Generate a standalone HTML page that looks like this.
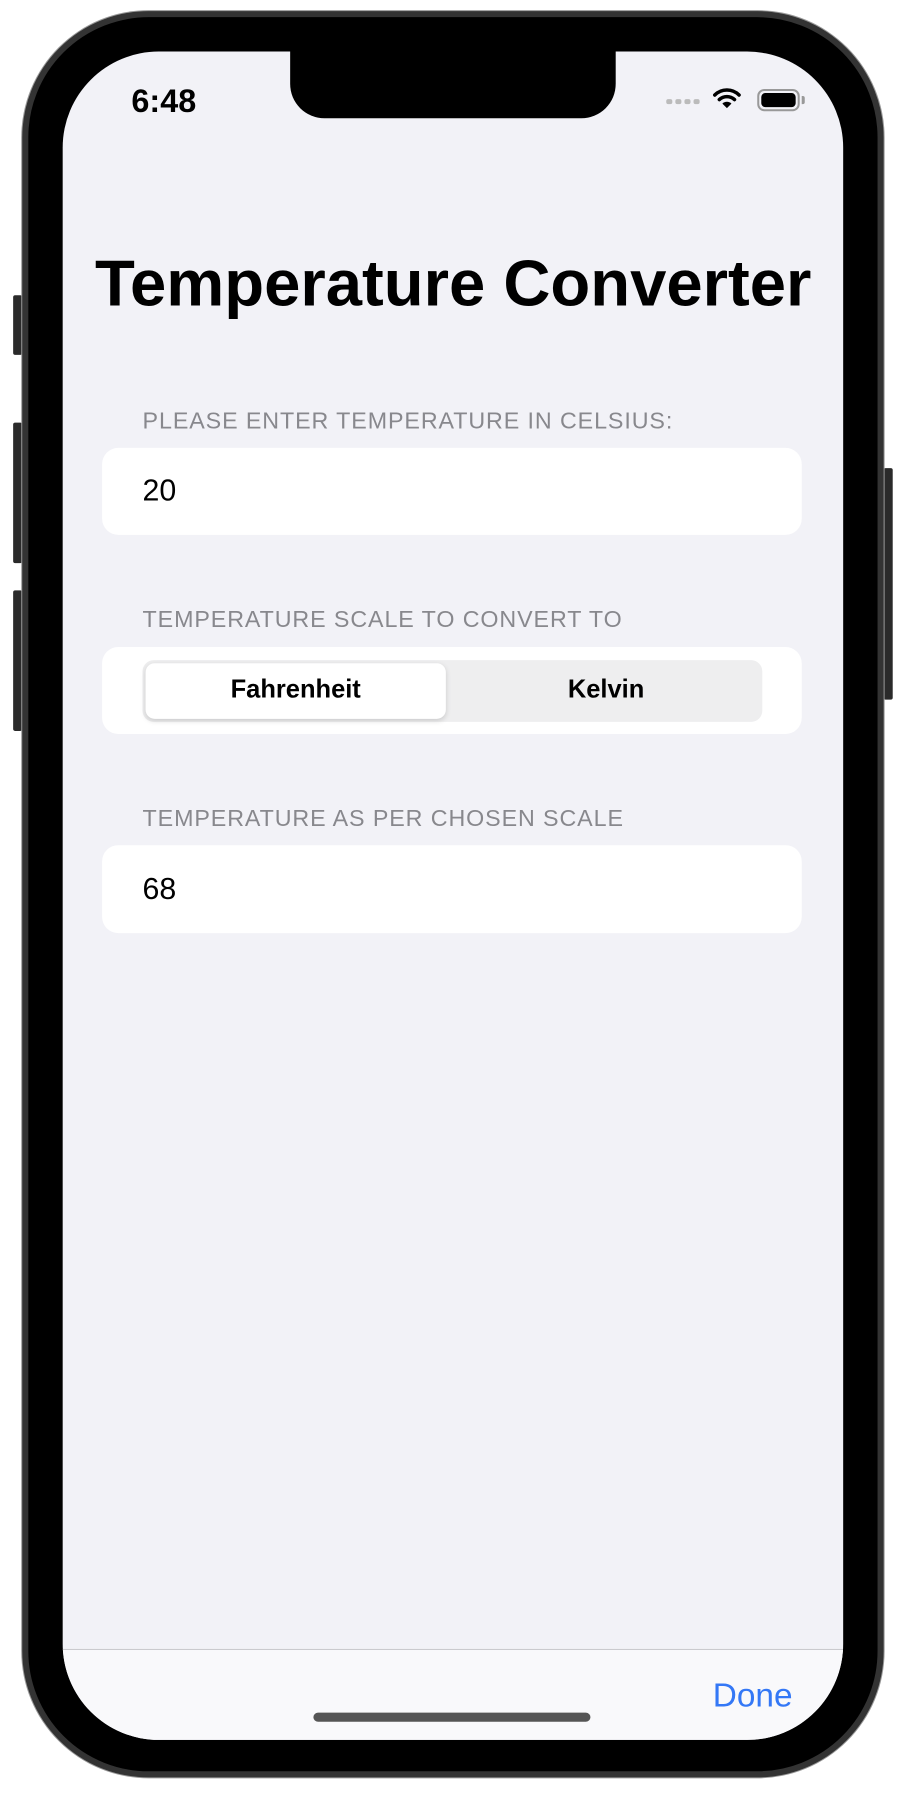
<!DOCTYPE html>
<html><head><meta charset="utf-8"><style>
*{margin:0;padding:0;box-sizing:border-box}
body{width:897px;height:1783px;background:#fff;position:relative;overflow:hidden;font-family:"Liberation Sans",sans-serif}
#wrap{position:absolute;left:0;top:0;width:897px;height:1783px;transform:scale(1.011);transform-origin:0 0}
.abs{position:absolute}
.phone{left:22px;top:11px;width:852px;height:1747px;background:#000;border-radius:125px;border:6px solid #333;box-shadow:0 0 0 1px #999}
.btn{background:#2a2a2a;border-radius:2px}
.screen{left:62px;top:51px;width:772px;height:1670px;background:#f2f2f7;border-radius:95px;overflow:hidden}
.notch{left:225px;top:-2px;width:322px;height:68px;background:#000;border-radius:0 0 34px 34px}
.label{left:79px;font-size:23px;color:#88888d;letter-spacing:0.9px;white-space:nowrap}
.field{left:39px;width:692px;background:#fff;border-radius:16px}
.val{left:79px;font-size:30px;color:#000}
</style></head><body><div id="wrap">
<div class="abs btn" style="left:13px;top:292px;width:9px;height:59px"></div>
<div class="abs btn" style="left:13px;top:418px;width:9px;height:139px"></div>
<div class="abs btn" style="left:13px;top:584px;width:9px;height:139px"></div>
<div class="abs btn" style="left:874px;top:463px;width:9px;height:229px"></div>
<div class="abs phone"></div>
<div class="abs screen">
  <div class="abs notch"></div>
  <div class="abs" style="left:68px;top:31px;font-size:32px;font-weight:bold">6:48</div>
  <div class="abs" style="left:597px;top:47px;display:flex;gap:3px">
    <i style="width:6px;height:5px;background:#bbb;border-radius:2px"></i><i style="width:6px;height:5px;background:#bbb;border-radius:2px"></i><i style="width:6px;height:5px;background:#bbb;border-radius:2px"></i><i style="width:6px;height:5px;background:#bbb;border-radius:2px"></i>
  </div>
  <svg class="abs" style="left:643px;top:34px" width="28" height="24" viewBox="0 0 28 24"><path d="M2 9 A17 17 0 0 1 26 9" stroke="#000" stroke-width="3.5" fill="none" stroke-linecap="round"/><path d="M6.5 13.5 A11 11 0 0 1 21.5 13.5" stroke="#000" stroke-width="3.5" fill="none" stroke-linecap="round"/><path d="M14 22 L9.5 17.5 A6.5 6.5 0 0 1 18.5 17.5 Z" fill="#000"/></svg>
  <div class="abs" style="left:687px;top:37px;width:42px;height:22px;border:2px solid #999;border-radius:7px;padding:2px"><div style="width:100%;height:100%;background:#000;border-radius:4px"></div></div>
  <div class="abs" style="left:731px;top:44px;width:3px;height:8px;background:#999;border-radius:0 2px 2px 0"></div>
  <div class="abs" style="left:32px;top:192px;font-size:64.5px;font-weight:bold;color:#000;white-space:nowrap">Temperature Converter</div>
  <div class="abs label" style="top:352px">PLEASE ENTER TEMPERATURE IN CELSIUS:</div>
  <div class="abs field" style="top:392px;height:86px"></div>
  <div class="abs val" style="top:418px">20</div>
  <div class="abs label" style="top:548px">TEMPERATURE SCALE TO CONVERT TO</div>
  <div class="abs field" style="top:589px;height:86px"></div>
  <div class="abs" style="left:79px;top:602px;width:613px;height:61px;background:#eeeeef;border-radius:11px"></div>
  <div class="abs" style="left:82px;top:605px;width:297px;height:55px;background:#fff;border-radius:9px;box-shadow:0 2px 5px rgba(0,0,0,.15)"></div>
  <div class="abs" style="left:82px;top:617px;width:297px;text-align:center;font-size:25.2px;font-weight:bold">Fahrenheit</div>
  <div class="abs" style="left:386px;top:617px;width:303px;text-align:center;font-size:25.2px;font-weight:bold">Kelvin</div>
  <div class="abs label" style="top:745px">TEMPERATURE AS PER CHOSEN SCALE</div>
  <div class="abs field" style="top:785px;height:87px"></div>
  <div class="abs val" style="top:812px">68</div>
  <div class="abs" style="left:0;top:1580px;width:772px;height:90px;background:#f9f9fb;border-top:1px solid #c8c8cc"></div>
  <div class="abs" style="left:643px;top:1607px;font-size:33px;color:#3478f6">Done</div>
  <div class="abs" style="left:248px;top:1643px;width:274px;height:9px;background:#555;border-radius:5px"></div>
</div>
</div></body></html>
